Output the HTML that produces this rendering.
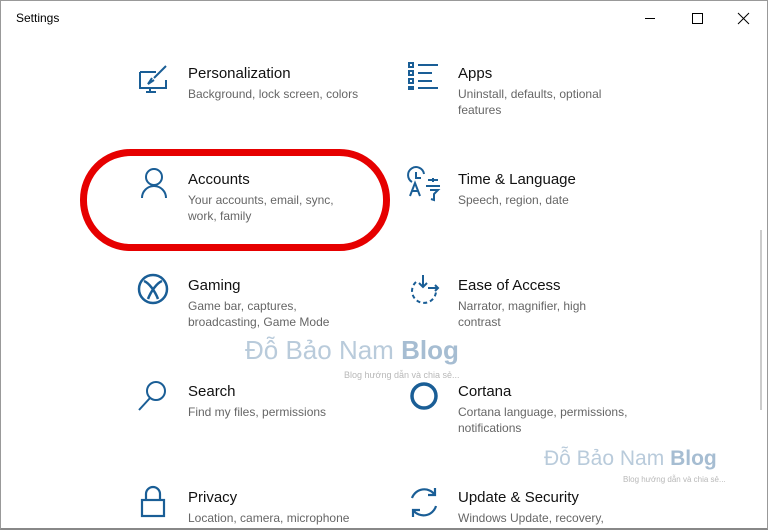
<!DOCTYPE html><html><head><style>
body{margin:0;width:768px;height:530px;overflow:hidden;background:#fff;font-family:"Liberation Sans",sans-serif;position:relative}
.win{position:absolute;left:0;top:0;width:766px;height:527px;border:1px solid #999;border-bottom:2px solid #888}
.t{position:absolute;font-size:15px;color:#111;white-space:nowrap}
.d{position:absolute;font-size:12px;color:#666;line-height:16px;white-space:nowrap}
svg.i{position:absolute;overflow:visible}
.wm{position:absolute;color:#b9cbdb;font-size:26px;white-space:nowrap}
.wm b{color:#a6bdd2}
.ws{position:absolute;color:#b8b8b8;font-size:9px;white-space:nowrap}
</style></head><body>
<div class="win"></div>
<div style="position:absolute;left:16px;top:11px;font-size:12px;color:#000">Settings</div>
<svg class="i" style="left:645px;top:12px" width="110" height="14"><line x1="0" y1="6.5" x2="10" y2="6.5" stroke="#000"/><rect x="47.5" y="1.5" width="10" height="10" fill="none" stroke="#000"/><path d="M93 1l11 11M104 1l-11 11" stroke="#000"/></svg>
<svg style="position:absolute;left:758px;top:230px" width="6" height="180"><line x1="3" y1="0" x2="3" y2="180" stroke="#ccc" stroke-width="2"/></svg>

<svg class="i" style="left:138px;top:64px" width="32" height="32" fill="none" stroke="#1a5e96" stroke-width="2"><path d="M2 8h16M2 8v16h26v-8M12 24v4M8 28h10"/><path d="M28 2l-12 12M14 14l-4 6 6-4"/></svg>
<div class="t" style="left:188px;top:65px">Personalization</div>
<div class="d" style="left:188px;top:86px">Background, lock screen, colors</div>

<svg class="i" style="left:408px;top:62px" width="32" height="30" fill="none" stroke="#1a5e96" stroke-width="2"><rect x="1" y="1" width="4" height="4"/><rect x="1" y="9" width="4" height="4"/><rect x="1" y="17" width="4" height="4"/><rect x="1" y="25" width="4" height="2"/><path d="M10 3h20M10 11h14M10 19h14M10 26h20"/></svg>
<div class="t" style="left:458px;top:65px">Apps</div>
<div class="d" style="left:458px;top:86px">Uninstall, defaults, optional<br>features</div>

<svg class="i" style="left:80px;top:149px" width="310" height="102"><rect x="3.5" y="3.5" width="303" height="95" rx="47" fill="none" stroke="#e60000" stroke-width="7"/></svg>
<svg class="i" style="left:140px;top:168px" width="28" height="32" fill="none" stroke="#1a5e96" stroke-width="2"><circle cx="14" cy="9" r="8"/><path d="M2 30a12 12 0 0 1 24 0"/></svg>
<div class="t" style="left:188px;top:171px">Accounts</div>
<div class="d" style="left:188px;top:192px">Your accounts, email, sync,<br>work, family</div>

<svg class="i" style="left:408px;top:168px" width="34" height="34" fill="none" stroke="#1a5e96" stroke-width="2"><path d="M4 14a8 8 0 1 1 12-8M8 4v6h5"/><path d="M2 28l5-13 5 13M4 23h6"/><path d="M20 12h10M25 10v4M18 18h14M22 22h8l-4 4v6l-3 -1"/></svg>
<div class="t" style="left:458px;top:171px">Time &amp; Language</div>
<div class="d" style="left:458px;top:192px">Speech, region, date</div>

<svg class="i" style="left:137px;top:273px" width="32" height="32" fill="none" stroke="#1a5e96" stroke-width="2.5"><circle cx="16" cy="16" r="14"/><path d="M7 8c5 2 11 10 14 18M25 8c-5 2-11 10-14 18"/></svg>
<div class="t" style="left:188px;top:277px">Gaming</div>
<div class="d" style="left:188px;top:298px">Game bar, captures,<br>broadcasting, Game Mode</div>

<svg class="i" style="left:408px;top:274px" width="32" height="30" fill="none" stroke="#1a5e96" stroke-width="2"><path d="M8 8a12 12 0 1 0 20 8" stroke-dasharray="4 3"/><path d="M15 1v12M11 9l4 4 4-4M20 14h10M27 11l3 3-3 3"/></svg>
<div class="t" style="left:458px;top:277px">Ease of Access</div>
<div class="d" style="left:458px;top:298px">Narrator, magnifier, high<br>contrast</div>

<div class="wm" style="left:245px;top:335px">Đỗ Bảo Nam <b>Blog</b></div>
<div class="ws" style="left:344px;top:370px">Blog hướng dẫn và chia sẻ...</div>

<svg class="i" style="left:137px;top:380px" width="32" height="32" fill="none" stroke="#1a5e96" stroke-width="2"><circle cx="19" cy="11" r="9"/><path d="M13 18L2 30"/></svg>
<div class="t" style="left:188px;top:383px">Search</div>
<div class="d" style="left:188px;top:404px">Find my files, permissions</div>

<svg class="i" style="left:408px;top:380px" width="32" height="32" fill="none" stroke="#1a5e96" stroke-width="3.5"><circle cx="16" cy="16" r="12"/></svg>
<div class="t" style="left:458px;top:383px">Cortana</div>
<div class="d" style="left:458px;top:404px">Cortana language, permissions,<br>notifications</div>

<div class="wm" style="left:544px;top:447px;font-size:21px">Đỗ Bảo Nam <b>Blog</b></div>
<div class="ws" style="left:623px;top:475px;font-size:8px">Blog hướng dẫn và chia sẻ...</div>

<svg class="i" style="left:140px;top:486px" width="28" height="34" fill="none" stroke="#1a5e96" stroke-width="2.2"><path d="M6 14V8a7 7 0 0 1 14 0v6"/><rect x="2" y="14" width="22" height="16"/></svg>
<div class="t" style="left:188px;top:489px">Privacy</div>
<div class="d" style="left:188px;top:510px">Location, camera, microphone</div>

<svg class="i" style="left:407px;top:486px" width="34" height="34" fill="none" stroke="#1a5e96" stroke-width="2.2"><path d="M5 12a13 13 0 0 1 23-3M28 2v7h-7"/><path d="M29 20a13 13 0 0 1-23 4M6 31v-7h7"/></svg>
<div class="t" style="left:458px;top:489px">Update &amp; Security</div>
<div class="d" style="left:458px;top:510px">Windows Update, recovery,</div>
</body></html>
